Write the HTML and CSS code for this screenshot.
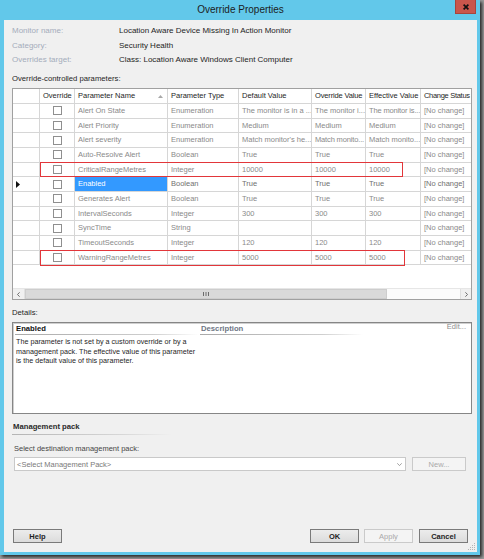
FILE: index.html
```html
<!DOCTYPE html>
<html>
<head>
<meta charset="utf-8">
<link rel="stylesheet" href="styles.css">
</head>
<body>
<div class="window">
  <div class="titlebar">
    <span class="title">Override Properties</span>
    <div class="close"><svg width="6" height="6" viewBox="0 0 6 6"><path d="M0.6 0.6 L5.4 5.4 M5.4 0.6 L0.6 5.4" stroke="#111" stroke-width="1.7"/></svg></div>
  </div>
  <div class="client">
    <div class="info">
      <div class="info-row"><span class="info-label">Monitor name:</span><span class="info-value">Location Aware Device Missing In Action Monitor</span></div>
      <div class="info-row"><span class="info-label">Category:</span><span class="info-value">Security Health</span></div>
      <div class="info-row"><span class="info-label">Overrides target:</span><span class="info-value">Class: Location Aware Windows Client Computer</span></div>
    </div>
    <div class="section-label">Override-controlled parameters:</div>
    <div class="grid">
      <div class="grid-body">
        <div class="grow ghead">
          <div class="gcell c0"></div>
          <div class="gcell c1">Override</div>
          <div class="gcell c2 sortcol">Parameter Name<svg class="sort" width="5" height="3" viewBox="0 0 5 3"><path d="M0 3 L2.5 0 L5 3 Z" fill="#a8a8a8"/></svg></div>
          <div class="gcell c3">Parameter Type</div>
          <div class="gcell c4">Default Value</div>
          <div class="gcell c5 tight">Override Value</div>
          <div class="gcell c6">Effective Value</div>
          <div class="gcell c7 tighter">Change Status</div>
        </div>
        <div class="grow"><div class="gcell c0"></div><div class="gcell c1"><span class="cb"></span></div><div class="gcell c2">Alert On State</div><div class="gcell c3">Enumeration</div><div class="gcell c4">The monitor is in a ...</div><div class="gcell c5">The monitor i...</div><div class="gcell c6 tight">The monitor is...</div><div class="gcell c7">[No change]</div></div>
        <div class="grow"><div class="gcell c0"></div><div class="gcell c1"><span class="cb"></span></div><div class="gcell c2">Alert Priority</div><div class="gcell c3">Enumeration</div><div class="gcell c4">Medium</div><div class="gcell c5">Medium</div><div class="gcell c6">Medium</div><div class="gcell c7">[No change]</div></div>
        <div class="grow"><div class="gcell c0"></div><div class="gcell c1"><span class="cb"></span></div><div class="gcell c2">Alert severity</div><div class="gcell c3">Enumeration</div><div class="gcell c4">Match monitor's he...</div><div class="gcell c5 tight">Match monito...</div><div class="gcell c6">Match monito...</div><div class="gcell c7">[No change]</div></div>
        <div class="grow"><div class="gcell c0"></div><div class="gcell c1"><span class="cb"></span></div><div class="gcell c2">Auto-Resolve Alert</div><div class="gcell c3">Boolean</div><div class="gcell c4">True</div><div class="gcell c5">True</div><div class="gcell c6">True</div><div class="gcell c7">[No change]</div></div>
        <div class="grow"><div class="gcell c0"></div><div class="gcell c1"><span class="cb"></span></div><div class="gcell c2">CriticalRangeMetres</div><div class="gcell c3">Integer</div><div class="gcell c4">10000</div><div class="gcell c5">10000</div><div class="gcell c6">10000</div><div class="gcell c7">[No change]</div></div>
        <div class="grow current"><div class="gcell c0"><svg class="marker" width="4" height="7" viewBox="0 0 4 7"><path d="M0 0 L4 3.5 L0 7 Z" fill="#111"/></svg></div><div class="gcell c1"><span class="cb"></span></div><div class="gcell c2 selected">Enabled</div><div class="gcell c3">Boolean</div><div class="gcell c4">True</div><div class="gcell c5">True</div><div class="gcell c6">True</div><div class="gcell c7">[No change]</div></div>
        <div class="grow"><div class="gcell c0"></div><div class="gcell c1"><span class="cb"></span></div><div class="gcell c2">Generates Alert</div><div class="gcell c3">Boolean</div><div class="gcell c4">True</div><div class="gcell c5">True</div><div class="gcell c6">True</div><div class="gcell c7">[No change]</div></div>
        <div class="grow"><div class="gcell c0"></div><div class="gcell c1"><span class="cb"></span></div><div class="gcell c2">IntervalSeconds</div><div class="gcell c3">Integer</div><div class="gcell c4">300</div><div class="gcell c5">300</div><div class="gcell c6">300</div><div class="gcell c7">[No change]</div></div>
        <div class="grow"><div class="gcell c0"></div><div class="gcell c1"><span class="cb"></span></div><div class="gcell c2">SyncTime</div><div class="gcell c3">String</div><div class="gcell c4"></div><div class="gcell c5"></div><div class="gcell c6"></div><div class="gcell c7">[No change]</div></div>
        <div class="grow"><div class="gcell c0"></div><div class="gcell c1"><span class="cb"></span></div><div class="gcell c2">TimeoutSeconds</div><div class="gcell c3">Integer</div><div class="gcell c4">120</div><div class="gcell c5">120</div><div class="gcell c6">120</div><div class="gcell c7">[No change]</div></div>
        <div class="grow"><div class="gcell c0"></div><div class="gcell c1"><span class="cb"></span></div><div class="gcell c2">WarningRangeMetres</div><div class="gcell c3">Integer</div><div class="gcell c4">5000</div><div class="gcell c5">5000</div><div class="gcell c6">5000</div><div class="gcell c7">[No change]</div></div>
      </div>
      <div class="hscroll">
        <div class="sbtn sbtn-l"><svg width="3" height="5" viewBox="0 0 3 5"><path d="M2.6 0.3 L0.5 2.5 L2.6 4.7" fill="none" stroke="#606060" stroke-width="0.9"/></svg></div>
        <div class="thumb"><svg width="6" height="4" viewBox="0 0 6 4"><path d="M0.5 0 V4 M3 0 V4 M5.5 0 V4" stroke="#606060" stroke-width="0.9"/></svg></div>
        <div class="track"></div>
        <div class="sbtn sbtn-r"><svg width="3" height="5" viewBox="0 0 3 5"><path d="M0.4 0.3 L2.5 2.5 L0.4 4.7" fill="none" stroke="#606060" stroke-width="0.9"/></svg></div>
      </div>
      <div class="redbox rb-critical"></div>
      <div class="redbox rb-warning"></div>
    </div>
    <div class="details-label">Details:</div>
    <div class="details">
      <div class="dcol-left">
        <div class="dtitle">Enabled</div>
        <div class="dsep"></div>
        <div class="dtext">The parameter is not set by a custom override or by a<br>management pack. The effective value of this parameter<br>is the default value of this parameter.</div>
      </div>
      <div class="dcol-right">
        <div class="dtitle dtitle-desc">Description</div>
        <div class="dsep dsep-desc"></div>
      </div>
      <div class="edit">Edit...</div>
    </div>
    <div class="mp-title">Management pack</div>
    <div class="mp-sep"></div>
    <div class="mp-label">Select destination management pack:</div>
    <div class="combo-row">
      <div class="combo"><span class="combo-text">&lt;Select Management Pack&gt;</span><svg class="combo-arrow" width="5" height="3" viewBox="0 0 5 3"><path d="M0.3 0.3 L2.5 2.6 L4.7 0.3" fill="none" stroke="#8a8a8a" stroke-width="0.8"/></svg></div>
      <div class="btn btn-disabled btn-new">New...</div>
    </div>
    <div class="button-row">
      <div class="btn btn-help">Help</div>
      <div class="spacer"></div>
      <div class="btn">OK</div>
      <div class="btn btn-disabled btn-apply">Apply</div>
      <div class="btn btn-cancel">Cancel</div>
    </div>
    <svg class="grip" width="8" height="8" viewBox="0 0 8 8"><g fill="#b4b4b4"><rect x="6" y="0" width="1" height="1"/><rect x="4" y="2" width="1" height="1"/><rect x="6" y="2" width="1" height="1"/><rect x="2" y="4" width="1" height="1"/><rect x="4" y="4" width="1" height="1"/><rect x="6" y="4" width="1" height="1"/><rect x="0" y="6" width="1" height="1"/><rect x="2" y="6" width="1" height="1"/><rect x="4" y="6" width="1" height="1"/><rect x="6" y="6" width="1" height="1"/></g></svg>
  </div>
</div>
</body>
</html>
```

FILE: styles.css
```css
* { box-sizing: border-box; }
html, body { margin: 0; padding: 0; }
body {
  width: 484px;
  height: 559px;
  overflow: hidden;
  background: #9c9c9c;
  font-family: "Liberation Sans", Arial, sans-serif;
  font-size: 7.5px;
  color: #1e1e1e;
}
.window {
  width: 480px;
  height: 555px;
  background: #62c8ea;
  padding: 0 3px 3px 4px;
  display: flex;
  flex-direction: column;
  box-shadow: 2px 2px 3px rgba(0, 0, 0, 0.75);
}
.titlebar {
  position: relative;
  height: 20px;
  line-height: 20px;
  text-align: center;
  font-size: 10px;
  color: #1c1c1c;
}
.close {
  position: absolute;
  top: 0;
  right: 1px;
  width: 21px;
  height: 14px;
  background: #c9564c;
  border: 1px solid #a8443b;
  border-top: none;
  display: flex;
  align-items: center;
  justify-content: center;
}
.client {
  position: relative;
  flex: 1;
  background: #f0f0f0;
  padding: 4px 5px 9px 8px;
  display: flex;
  flex-direction: column;
}
.info { font-size: 8px; }
.info-row {
  display: flex;
  line-height: 14.5px;
  white-space: nowrap;
}
.info-label {
  width: 107px;
  color: #a4acbb;
}
.info-value { color: #1e1e1e; }
.section-label {
  margin-top: 5px;
  line-height: 12px;
  font-size: 7.7px;
  color: #1e1e1e;
}
.grid {
  position: relative;
  margin-top: 3.5px;
  height: 212px;
  flex: none;
  border: 1px solid #a0a0a0;
  background: #fff;
  display: flex;
  flex-direction: column;
}
.grid-body {
  flex: 1;
  overflow: hidden;
}
.grow {
  display: flex;
  height: 14.67px;
  width: max-content;
}
.gcell {
  flex: none;
  height: 100%;
  border-right: 1px solid #d6d6d6;
  border-bottom: 1px solid #d6d6d6;
  padding: 0 0 0 3px;
  white-space: nowrap;
  overflow: hidden;
  line-height: 13.67px;
  color: #8a8a8a;
}
.tight { letter-spacing: -0.15px; }
.ghead { height: 15px; }
.ghead .gcell {
  color: #1e1e1e;
  line-height: 14px;
}
.ghead .tighter { letter-spacing: -0.3px; }
.sortcol {
  display: flex;
  align-items: center;
  justify-content: space-between;
  padding-right: 4px;
}
.c0 { width: 27px; display: flex; align-items: center; padding-left: 3px; }
.c1 { width: 35px; display: flex; align-items: center; justify-content: center; padding-left: 0; }
.c2 { width: 93px; }
.c3 { width: 71px; }
.c4 { width: 73px; }
.c5 { width: 54px; }
.c6 { width: 55px; }
.c7 { width: 51px; border-right: none; }
.ghead .c1 { justify-content: flex-start; padding-left: 3px; }
.cb {
  display: block;
  width: 9px;
  height: 9px;
  border: 1px solid #8f8f8f;
  background: #fff;
}
.current .c3, .current .c4, .current .c5, .current .c6, .current .c7 { color: #707070; }
.selected {
  background: #3399ff;
  color: #fff;
}
.hscroll {
  height: 11px;
  flex: none;
  display: flex;
  background: #f4f4f4;
  border-top: 1px solid #e6e6e6;
}
.sbtn {
  display: flex;
  align-items: center;
  justify-content: center;
  background: #f0f0f0;
}
.sbtn-l { width: 12px; border-right: 1px solid #e0e0e0; }
.sbtn-r { width: 11px; border-left: 1px solid #e0e0e0; }
.thumb {
  width: 362px;
  background: #d9d9d9;
  border: 1px solid #cdcdcd;
  display: flex;
  align-items: center;
  justify-content: center;
}
.track { flex: 1; background: #fbfbfb; }
.redbox {
  position: absolute;
  border: 1.5px solid #e2363a;
  pointer-events: none;
}
.rb-critical { left: 27px; top: 73px; width: 363px; height: 14.5px; }
.rb-warning { left: 27px; top: 161px; width: 365px; height: 15.5px; }
.details-label {
  margin-top: 7px;
  line-height: 12px;
  font-size: 7.7px;
}
.details {
  position: relative;
  margin-top: 3px;
  height: 92px;
  flex: none;
  border: 1px solid #868686;
  box-shadow: inset 1px 1px 0 #cfcfcf;
  background: #fff;
  display: flex;
  padding-left: 2px;
}
.dcol-left { width: 184px; }
.dcol-right { margin-left: 1px; width: 163px; }
.dtitle {
  font-weight: bold;
  font-size: 7.7px;
  line-height: 11px;
  padding-left: 1px;
  color: #111;
}
.dtitle-desc { color: #6e7684; }
.dsep {
  height: 1px;
  background: linear-gradient(to right, #a9a9a9, #cfcfcf 75%, rgba(255,255,255,0));
}
.dtext {
  margin-top: 2.2px;
  padding-left: 1px;
  font-size: 7.2px;
  line-height: 9.6px;
  white-space: nowrap;
  color: #1e1e1e;
}
.edit {
  margin-left: auto;
  padding-right: 5px;
  line-height: 8px;
  color: #8d8d8d;
}
.mp-title {
  margin-top: 7px;
  padding-left: 1px;
  font-weight: bold;
  font-size: 7.7px;
  line-height: 12px;
  color: #2a2a2a;
}
.mp-sep {
  margin-top: 1px;
  width: 160px;
  height: 1px;
  background: linear-gradient(to right, #b4b4b4, #d8d8d8 70%, rgba(240,240,240,0));
}
.mp-label {
  margin-top: 8px;
  padding-left: 2px;
  line-height: 12px;
  color: #474747;
}
.combo-row {
  margin-top: 2px;
  padding-left: 2px;
  display: flex;
  height: 14px;
  flex: none;
}
.combo {
  width: 392px;
  height: 14px;
  border: 1px solid #c9c9c9;
  background: #fff;
  display: flex;
  align-items: center;
  padding: 0 3px 0 2px;
}
.combo-text { flex: 1; color: #7a7a7a; }
.combo-arrow { flex: none; }
.btn {
  width: 49px;
  height: 14px;
  border: 1px solid #7a7a7a;
  background: linear-gradient(#ececec, #dcdcdc);
  display: flex;
  align-items: center;
  justify-content: center;
  font-weight: bold;
  color: #222;
}
.btn-disabled {
  border-color: #cacaca;
  background: #f4f4f4;
  color: #a9a9a9;
  font-weight: normal;
}
.btn-new { margin-left: 6px; width: 54px; }
.button-row {
  margin-top: auto;
  display: flex;
  height: 14px;
  flex: none;
}
.btn-help { margin-left: 1px; }
.spacer { flex: 1; }
.btn-apply { margin-left: 5px; }
.btn-cancel { margin-left: 6px; margin-right: 4px; }
.grip {
  position: absolute;
  right: 1px;
  bottom: 1px;
}
```
